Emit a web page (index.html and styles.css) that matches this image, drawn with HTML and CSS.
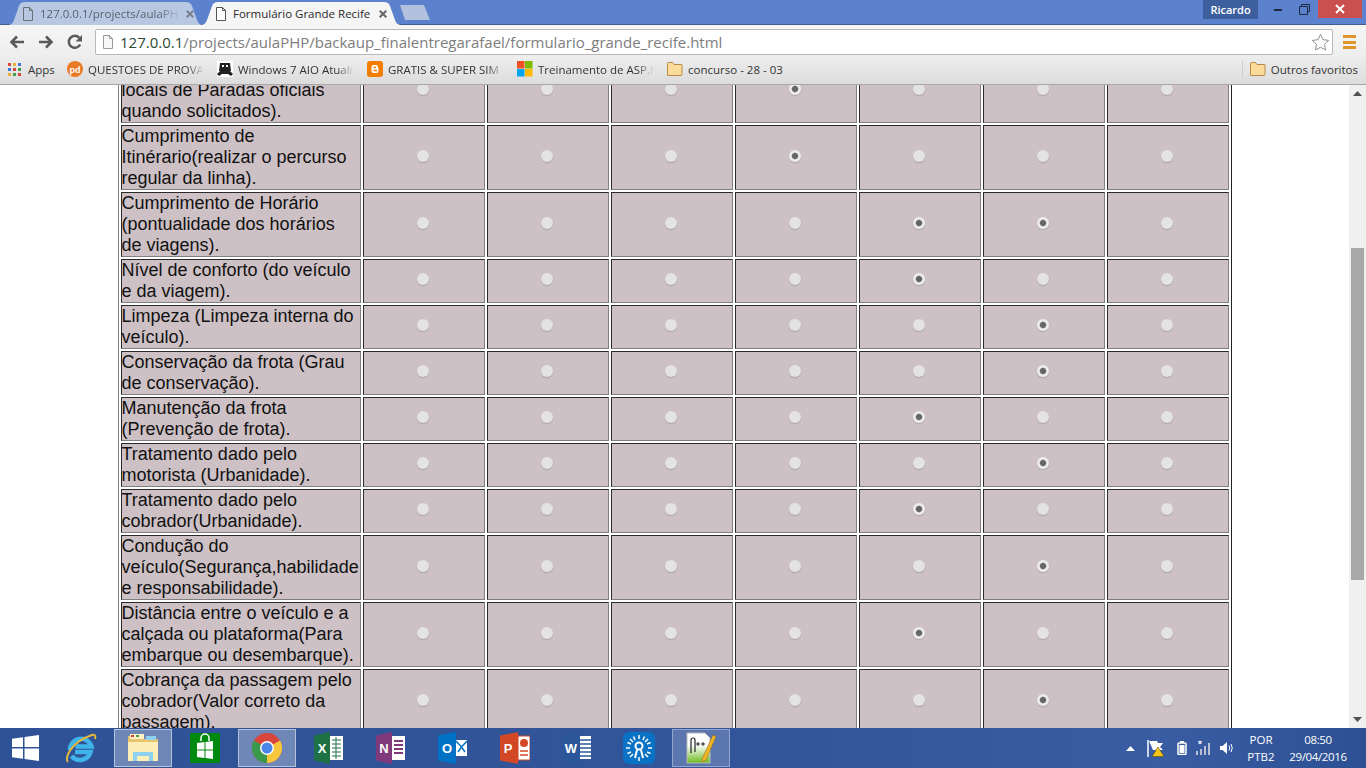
FILE: index.html
```html
<!DOCTYPE html>
<html lang="pt-BR">
<head>
<meta charset="utf-8">
<title>Formulário Grande Recife</title>
<link rel="stylesheet" href="styles.css">
</head>
<body>
<div class="screen">
  <header class="tabstrip">
    <div class="tab tab-inactive">
      <svg class="page-icon" viewBox="0 0 12 14" width="12" height="14"><path d="M1.5.5h6l3 3v10h-9z M7.5.5v3h3" fill="none" stroke="#6b6f78"/></svg>
      <span class="tab-title tab-title-fade">127.0.0.1/projects/aulaPH</span>
      <svg class="tab-x" viewBox="0 0 8 8" width="8" height="8"><path d="M.7.7l6.600 6.600M7.300.7L.7 7.300" stroke="#7a8290" stroke-width="2"/></svg>
    </div>
    <div class="tab tab-active">
      <svg class="page-icon" viewBox="0 0 12 14" width="12" height="14"><path d="M1.5.5h6l3 3v10h-9z M7.5.5v3h3" fill="#fff" stroke="#555"/></svg>
      <span class="tab-title">Formulário Grande Recife</span>
      <svg class="tab-x" viewBox="0 0 8 8" width="8" height="8"><path d="M.7.7l6.600 6.600M7.300.7L.7 7.300" stroke="#666" stroke-width="2"/></svg>
    </div>
    <div class="tab-new"></div>
    <div class="spacer"></div>
    <div class="user">Ricardo</div>
    <div class="winbtn">
      <svg width="8" height="3" viewBox="0 0 8 3"><rect width="8" height="2" y="1" fill="#1d2a44"/></svg>
    </div>
    <div class="winbtn">
      <svg width="11" height="11" viewBox="0 0 11 11"><path d="M2.5 2.500v-2h8v7h-2M.5 2.500h8v8h-8z" fill="none" stroke="#1d2a44"/></svg>
    </div>
    <div class="winclose">
      <svg width="10" height="10" viewBox="0 0 10 10"><path d="M1 1l8 8M9 1l-8 8" stroke="#fff" stroke-width="2"/></svg>
    </div>
  </header>

  <div class="toolbar">
    <svg class="nav-icon" viewBox="0 0 18 18" width="18" height="18"><path d="M16 9H4M9 3.500L3.500 9 9 14.500" fill="none" stroke="#5a5a5a" stroke-width="2.600"/></svg>
    <svg class="nav-icon" viewBox="0 0 18 18" width="18" height="18"><path d="M2 9h12M9 3.500L14.500 9 9 14.500" fill="none" stroke="#5a5a5a" stroke-width="2.600"/></svg>
    <svg class="nav-icon" viewBox="0 0 18 18" width="18" height="18"><path d="M14.200 11.500A6 6 0 1 1 13.300 4.800" fill="none" stroke="#5a5a5a" stroke-width="2.500"/><path d="M16 2v6.500H9.500z" fill="#5a5a5a"/></svg>
    <div class="omnibox">
      <svg class="omni-page" viewBox="0 0 12 14" width="12" height="14"><path d="M1.500.5h6l3 3v10h-9z M7.500.5v3h3" fill="#f6f6f6" stroke="#9a9a9a"/></svg>
      <span class="url"><span class="url-host">127.0.0.1</span>/projects/aulaPHP/backaup_finalentregarafael/formulario_grande_recife.html</span>
      <svg class="star" viewBox="0 0 20 20" width="19" height="19"><path d="M10 1.500l2.600 5.500 6 .8-4.400 4.100 1.100 6L10 15l-5.300 2.900 1.100-6L1.400 7.800l6-.8z" fill="#fff" stroke="#8a8a8a"/></svg>
    </div>
    <div class="menu"><i></i><i></i><i></i></div>
  </div>

  <nav class="bookmarks">
    <a class="bm bm-apps">
      <svg viewBox="0 0 13 13" width="13" height="13" class="bm-icon">
        <rect width="3" height="3" fill="#d8453a"/><rect x="5" width="3" height="3" fill="#e8b030"/><rect x="10" width="3" height="3" fill="#3b78d8"/>
        <rect y="5" width="3" height="3" fill="#3b78d8"/><rect x="5" y="5" width="3" height="3" fill="#d8453a"/><rect x="10" y="5" width="3" height="3" fill="#3fa24a"/>
        <rect y="10" width="3" height="3" fill="#e8b030"/><rect x="5" y="10" width="3" height="3" fill="#3fa24a"/><rect x="10" y="10" width="3" height="3" fill="#d8453a"/>
      </svg>
      <span>Apps</span>
    </a>
    <a class="bm bm-q">
      <svg viewBox="0 0 16 16" width="16" height="16" class="bm-icon"><circle cx="8" cy="8" r="8" fill="#ea7a26"/><text x="8" y="11.500" class="pd-text">pd</text></svg>
      <span class="bm-fade">QUESTOES DE PROVA</span>
    </a>
    <a class="bm bm-w">
      <svg viewBox="0 0 16 16" width="16" height="16" class="bm-icon"><rect width="16" height="16" fill="#fff"/><path d="M3 2h10l1 8H2z" fill="#222"/><rect x="5" y="4" width="2" height="2" fill="#fff"/><rect x="9" y="4" width="2" height="2" fill="#fff"/><path d="M0 13l3-3h10l3 3-2 2-3-2H5l-3 2z" fill="#222"/></svg>
      <span class="bm-fade">Windows 7 AIO Atuali</span>
    </a>
    <a class="bm bm-b">
      <svg viewBox="0 0 16 16" width="16" height="16" class="bm-icon"><rect width="16" height="16" rx="3" fill="#f57d00"/><path d="M6.500 4h2.500a2 2 0 0 1 2 2v1h.5v3a2 2 0 0 1-2 2H6.500a2 2 0 0 1-2-2V6a2 2 0 0 1 2-2z" fill="#fff"/><path d="M6.500 6.500h2.500M6.500 9.500h3.500" stroke="#f57d00" stroke-width="1.300"/></svg>
      <span class="bm-fade">GRATIS &amp; SUPER SIM</span>
    </a>
    <a class="bm bm-m">
      <svg viewBox="0 0 16 16" width="16" height="16" class="bm-icon"><rect width="7.500" height="7.500" fill="#f25022"/><rect x="8" width="7.500" height="7.500" fill="#7fba00"/><rect y="8" width="7.500" height="7.500" fill="#00a4ef"/><rect x="8" y="8" width="7.500" height="7.500" fill="#ffb900"/></svg>
      <span class="bm-fade">Treinamento de ASP.N</span>
    </a>
    <a class="bm bm-c">
      <svg viewBox="0 0 16 14" width="16" height="14" class="bm-icon"><path d="M.5 3V1.500a1 1 0 0 1 1-1h4l1.500 2h7.500a.5.500 0 0 1 .5.500v9.500a1 1 0 0 1-1 1h-13a.5.500 0 0 1-.5-.5z" fill="#fbdc9a" stroke="#b98a42"/></svg>
      <span>concurso - 28 - 03</span>
    </a>
    <div class="spacer"></div>
    <div class="bm-sep"></div>
    <a class="bm bm-o">
      <svg viewBox="0 0 16 14" width="16" height="14" class="bm-icon"><path d="M.5 3V1.500a1 1 0 0 1 1-1h4l1.500 2h7.500a.5.500 0 0 1 .5.500v9.500a1 1 0 0 1-1 1h-13a.5.500 0 0 1-.5-.5z" fill="#fbdc9a" stroke="#b98a42"/></svg>
      <span>Outros favoritos</span>
    </a>
  </nav>

  <div class="viewport">
    <main class="content">
      <table class="survey">
        <tr><td class="q">Cumprimento de paradas nos locais de Paradas oficiais quando solicitados).</td>
          <td><input type="radio"></td><td><input type="radio"></td><td><input type="radio"></td><td><input type="radio" checked></td><td><input type="radio"></td><td><input type="radio"></td><td><input type="radio"></td></tr>
        <tr><td class="q">Cumprimento de Itinérario(realizar o percurso regular da linha).</td>
          <td><input type="radio"></td><td><input type="radio"></td><td><input type="radio"></td><td><input type="radio" checked></td><td><input type="radio"></td><td><input type="radio"></td><td><input type="radio"></td></tr>
        <tr><td class="q">Cumprimento de Horário (pontualidade dos horários de viagens).</td>
          <td><input type="radio"></td><td><input type="radio"></td><td><input type="radio"></td><td><input type="radio"></td><td><input type="radio" checked></td><td><input type="radio" checked></td><td><input type="radio"></td></tr>
        <tr><td class="q">Nível de conforto (do veículo e da viagem).</td>
          <td><input type="radio"></td><td><input type="radio"></td><td><input type="radio"></td><td><input type="radio"></td><td><input type="radio" checked></td><td><input type="radio"></td><td><input type="radio"></td></tr>
        <tr><td class="q">Limpeza (Limpeza interna do veículo).</td>
          <td><input type="radio"></td><td><input type="radio"></td><td><input type="radio"></td><td><input type="radio"></td><td><input type="radio"></td><td><input type="radio" checked></td><td><input type="radio"></td></tr>
        <tr><td class="q">Conservação da frota (Grau de conservação).</td>
          <td><input type="radio"></td><td><input type="radio"></td><td><input type="radio"></td><td><input type="radio"></td><td><input type="radio"></td><td><input type="radio" checked></td><td><input type="radio"></td></tr>
        <tr><td class="q">Manutenção da frota (Prevenção de frota).</td>
          <td><input type="radio"></td><td><input type="radio"></td><td><input type="radio"></td><td><input type="radio"></td><td><input type="radio" checked></td><td><input type="radio"></td><td><input type="radio"></td></tr>
        <tr><td class="q">Tratamento dado pelo motorista (Urbanidade).</td>
          <td><input type="radio"></td><td><input type="radio"></td><td><input type="radio"></td><td><input type="radio"></td><td><input type="radio"></td><td><input type="radio" checked></td><td><input type="radio"></td></tr>
        <tr><td class="q">Tratamento dado pelo cobrador(Urbanidade).</td>
          <td><input type="radio"></td><td><input type="radio"></td><td><input type="radio"></td><td><input type="radio"></td><td><input type="radio" checked></td><td><input type="radio"></td><td><input type="radio"></td></tr>
        <tr><td class="q">Condução do veículo(Segurança,habilidade e responsabilidade).</td>
          <td><input type="radio"></td><td><input type="radio"></td><td><input type="radio"></td><td><input type="radio"></td><td><input type="radio"></td><td><input type="radio" checked></td><td><input type="radio"></td></tr>
        <tr><td class="q">Distância entre o veículo e a calçada ou plataforma(Para embarque ou desembarque).</td>
          <td><input type="radio"></td><td><input type="radio"></td><td><input type="radio"></td><td><input type="radio"></td><td><input type="radio" checked></td><td><input type="radio"></td><td><input type="radio"></td></tr>
        <tr><td class="q">Cobrança da passagem pelo cobrador(Valor correto da passagem).</td>
          <td><input type="radio"></td><td><input type="radio"></td><td><input type="radio"></td><td><input type="radio"></td><td><input type="radio"></td><td><input type="radio" checked></td><td><input type="radio"></td></tr>
      </table>
    </main>
    <aside class="scrollbar">
      <div class="sb-arrow"><svg width="9" height="5" viewBox="0 0 9 5"><path d="M4.500 0L9 5H0z" fill="#505050"/></svg></div>
      <div class="sb-track"><div class="sb-thumb"></div></div>
      <div class="sb-arrow"><svg width="9" height="5" viewBox="0 0 9 5"><path d="M4.500 5L0 0h9z" fill="#505050"/></svg></div>
    </aside>
  </div>

  <footer class="taskbar">
    <div class="start">
      <svg width="27" height="26" viewBox="0 0 27 26"><path d="M0 3.800L11 2.200V12H0zM12.500 2L27 0v12H12.500zM0 13.500h11v10.300L0 22.200zM12.500 13.500H27V26l-14.500-2z" fill="#fff"/></svg>
    </div>
    <div class="task">
      <svg width="32" height="32" viewBox="0 0 32 32"><path d="M5 18a11 11 0 0 1 21.500-3.500H10.500M10 20h15.500a11 11 0 0 1-19 4" fill="none" stroke="#3fb4ea" stroke-width="4.500"/><path d="M3 30C-1 26 6 10 27 3c3-1 4 1 3 4" fill="none" stroke="#e5b73b" stroke-width="2"/></svg>
    </div>
    <div class="task task-on">
      <svg width="32" height="30" viewBox="0 0 32 30"><path d="M1 3h11l2 3h17v22H1z" fill="#e9c46f"/><rect x="3" y="1" width="14" height="5" fill="#fdf1c6"/><rect x="4" y="2" width="3" height="2" fill="#d8453a"/><rect x="9" y="2" width="3" height="2" fill="#3fa24a"/><rect x="19" y="3" width="10" height="4" fill="#8fd2f0"/><path d="M1 9h30v19H1z" fill="#fdeeb8"/><path d="M6 28v-9h20v9h-4v-5H10v5z" fill="#8fd2f0"/></svg>
    </div>
    <div class="task">
      <svg width="30" height="30" viewBox="0 0 30 30"><rect width="30" height="30" fill="#00890f"/><path d="M11 8V5a4 4 0 0 1 8 0v3" fill="none" stroke="#fff" stroke-width="1.500"/><path d="M7 10l7.500-1v7.500H7zM15.500 9L23 8v8.500h-7.500zM7 17.500h7.500V25L7 24zM15.500 17.500H23V26l-7.500-1z" fill="#fff"/></svg>
    </div>
    <div class="task task-on">
      <svg width="30" height="30" viewBox="0 0 30 30"><circle cx="15" cy="15" r="15" fill="#d8453a"/><path d="M15 15L28 7.500A15 15 0 0 1 15 30z" fill="#f7c63a"/><path d="M15 15L15 30A15 15 0 0 1 2 7.500z" fill="#3a9a4c"/><circle cx="15" cy="15" r="7" fill="#fff"/><circle cx="15" cy="15" r="5.500" fill="#4a86e8"/></svg>
    </div>
    <div class="task">
      <svg width="30" height="32" viewBox="0 0 30 32"><path d="M0 3.500L16 0v32L0 28.500z" fill="#1e7145"/><rect x="16" y="4" width="13" height="24" fill="#fff"/><path d="M18 8h9M18 12h9M18 16h9M18 20h9M18 24h9M22 5v22" stroke="#1e7145"/><text x="8" y="21" class="app-letter">X</text></svg>
    </div>
    <div class="task">
      <svg width="30" height="32" viewBox="0 0 30 32"><path d="M0 3.500L16 0v32L0 28.500z" fill="#80397b"/><rect x="16" y="4" width="13" height="24" fill="#fff"/><path d="M18 9h9M18 13h9M18 17h9M18 21h9" stroke="#80397b" stroke-width="2"/><text x="8" y="21" class="app-letter">N</text></svg>
    </div>
    <div class="task">
      <svg width="30" height="32" viewBox="0 0 30 32"><path d="M0 3.500L18 0v32L0 28.500z" fill="#0072c6"/><rect x="18" y="8" width="11" height="16" fill="#fff"/><path d="M18 9l5.500 6L29 9M20 20l3.500-5 3.500 5" fill="none" stroke="#0072c6" stroke-width="1.500"/><text x="9" y="21" class="app-letter">O</text></svg>
    </div>
    <div class="task">
      <svg width="30" height="32" viewBox="0 0 30 32"><path d="M0 3.500L18 0v32L0 28.500z" fill="#d24726"/><path d="M18 4h12v24H18z" fill="#fff" stroke="#d24726"/><circle cx="24" cy="11" r="4" fill="#d24726"/><path d="M20 19h8M20 23h8" stroke="#d24726" stroke-width="1.500"/><text x="8" y="21" class="app-letter">P</text></svg>
    </div>
    <div class="task">
      <svg width="30" height="32" viewBox="0 0 30 32"><path d="M0 3.500L18 0v32L0 28.500z" fill="#2b579a"/><rect x="18" y="4" width="11" height="23" fill="#fff"/><path d="M18 8h11M18 12h11M18 16h11M18 20h11M18 24h11" stroke="#2b579a" stroke-width="1.500"/><text x="9" y="21" class="app-letter">W</text></svg>
    </div>
    <div class="task">
      <svg width="32" height="32" viewBox="0 0 32 32"><rect width="32" height="32" rx="6" fill="#0a72c4"/><g stroke="#fff" stroke-width="1.500"><path d="M16 3v4M16 25v4M3 16h4M25 16h4M7 7l3 3M25 7l-3 3M7 25l3-3M25 25l-3-3M10.500 4.500l1.500 3.500M21.500 4.500L20 8M4.500 10.500L8 12M27.500 10.500L24 12M4.500 21.500L8 20M27.500 21.500L24 20"/></g><circle cx="16" cy="14" r="3.500" fill="none" stroke="#fff" stroke-width="2"/><path d="M14 18l-2 8M18 18l2 8" stroke="#fff" stroke-width="2"/></svg>
    </div>
    <div class="task task-on task-on-dim">
      <svg width="32" height="32" viewBox="0 0 32 32"><defs><linearGradient id="npp-page" x1="0" y1="0" x2="0" y2="1"><stop offset=".4" stop-color="#fff"/><stop offset="1" stop-color="#6dbb1f"/></linearGradient></defs><path d="M2 1h18l5 5v25H2z" fill="url(#npp-page)" stroke="#b9b9b9"/><path d="M6 21V8a2 2 0 0 1 4 0v12" fill="none" stroke="#222" stroke-width="1.200"/><path d="M11 12h4M13 10v4M16 12h4M18 10v4" stroke="#222"/><path d="M17 27L28 3l3 1.500L21 28l-4 2z" fill="#f0b429" stroke="#8a6314" stroke-width=".5"/></svg>
    </div>
    <div class="spacer"></div>
    <div class="tray">
      <svg width="9" height="5" viewBox="0 0 9 5" class="tray-up"><path d="M4.500 0L9 5H0z" fill="#fff"/></svg>
      <svg width="18" height="17" viewBox="0 0 18 17" class="tray-flag"><path d="M1 0v17" stroke="#fff" stroke-width="1.500"/><path d="M2 1h8l1 2h5l-3 4 3 3H6z" fill="#fff"/><path d="M11 7l6 9.500H5z" fill="#f5c518" stroke="#4a3a00" stroke-width=".5"/></svg>
      <svg width="10" height="14" viewBox="0 0 10 14"><rect x="1" y="2" width="8" height="11.500" rx="1" fill="none" stroke="#fff" stroke-width="1.500"/><rect x="3" y="0" width="4" height="2" fill="#fff"/><rect x="2.500" y="4" width="5" height="8" fill="#fff"/></svg>
      <svg width="16" height="14" viewBox="0 0 16 14"><path d="M1 10h2v4H1zM5 8h2v6H5zM9 5h2v9H9zM13 2h2v12h-2z" fill="#b7c0d2"/><text x="3" y="7" class="tray-star">*</text></svg>
      <svg width="16" height="14" viewBox="0 0 16 14"><path d="M1 5h2.500L8 1v12L3.500 9H1z" fill="#fff"/><path d="M10 4.500q1.500 2.500 0 5M12 3q2.500 4 0 8" fill="none" stroke="#fff"/></svg>
    </div>
    <div class="lang"><span>POR</span><span>PTB2</span></div>
    <div class="clock"><span>08:50</span><span>29/04/2016</span></div>
  </footer>
</div>
</body>
</html>
```

FILE: styles.css
```css
* { box-sizing: border-box; }
html, body { margin: 0; height: 100%; overflow: hidden; }
body { font-family: "Liberation Sans", Arial, sans-serif; background: #fff; }
.screen { width: 1366px; height: 768px; display: flex; flex-direction: column; overflow: hidden; }
.spacer { flex: 1; }

/* title bar and tabs */
.tabstrip { height: 25px; flex: none; display: flex; align-items: flex-end; background: #5c82cd; border-bottom: 1px solid #3f5c96; padding-left: 7px; }
.tab { height: 23px; margin-bottom: -1px; display: flex; align-items: center; font: 11.500px "Open Sans", sans-serif; }
.tab-inactive { width: 197px; padding: 0 10px 0 15px; background: #b9c8e2; color: #59616f; clip-path: path("M0 23C4 23 6 21 7 18L12 4C13 1 15 0 18 0H179C182 0 184 1 185 4L190 18C191 21 193 23 197 23Z"); }
.tab-active { width: 202px; margin-left: -4px; padding: 0 15px 0 15px; background: #f5f5f5; color: #2a2a2a; clip-path: path("M0 23C4 23 6 21 7 18L12 4C13 1 15 0 18 0H184C187 0 189 1 190 4L195 18C196 21 198 23 202 23Z"); }
.page-icon { flex: none; margin-right: 6px; }
.tab-title { flex: 1; min-width: 0; white-space: nowrap; overflow: hidden; }
.tab-title-fade { -webkit-mask-image: linear-gradient(90deg, #000 85%, transparent); mask-image: linear-gradient(90deg, #000 85%, transparent); }
.tab-x { flex: none; margin-left: 6px; }
.tab-new { width: 30px; height: 15px; margin: 0 0 4px -2px; background: #b1c1de; clip-path: polygon(0 0, calc(100% - 6px) 0, 100% 100%, 5px 100%); }
.user { width: 55px; height: 19px; margin: 0 7px 5px 0; background: #3d5f9d; color: #fff; font: 600 11px/19px "Open Sans", sans-serif; text-align: center; }
.winbtn { width: 26px; height: 18px; margin-bottom: 6px; display: flex; align-items: center; justify-content: center; }
.winclose { width: 44px; height: 18px; margin: 0 4px 6px 1px; background: #c9504f; display: flex; align-items: center; justify-content: center; }

/* toolbar */
.toolbar { height: 31px; flex: none; display: flex; align-items: center; background: linear-gradient(#f6f6f6, #eeeeee); padding: 3px 0 0 8px; }
.nav-icon { flex: none; margin-right: 11px; }
.omnibox { width: 1238px; height: 26px; flex: none; display: flex; align-items: center; background: #fff; border: 1px solid #b8b8b8; border-radius: 2px; padding: 0 1px 0 6px; }
.omni-page { flex: none; margin-right: 6px; }
.url { flex: 1; font: 15px "Open Sans", sans-serif; color: #7d7d7d; white-space: nowrap; }
.url-host { color: #2d4a34; }
.star { flex: none; margin-right: 1px; }
.menu { margin-left: 10px; width: 13px; display: flex; flex-direction: column; gap: 2.500px; }
.menu i { display: block; height: 3px; background: #e0962a; }

/* bookmarks */
.bookmarks { height: 29px; flex: none; display: flex; align-items: center; background: linear-gradient(#eeeeee, #dcdcdc); border-bottom: 1px solid #a8a8a8; padding: 0 0 2px 8px; font: 11.500px "Open Sans", sans-serif; color: #333; }
.bm { display: flex; align-items: center; flex: none; white-space: nowrap; overflow: hidden; }
.bm-icon { flex: none; margin-right: 5px; }
.bm-apps { width: 59px; } .bm-apps .bm-icon { margin-right: 7px; }
.bm-q { width: 150px; }
.bm-w { width: 150px; }
.bm-b { width: 150px; }
.bm-m { width: 150px; }
.bm-c { width: 130px; }
.bm-fade { width: 116px; overflow: hidden; -webkit-mask-image: linear-gradient(90deg, #000 85%, transparent); mask-image: linear-gradient(90deg, #000 85%, transparent); }
.bm-sep { width: 1px; height: 17px; background: #cfcfcf; margin-right: 7px; }
.bm-o { margin-right: 8px; }
.pd-text { font: 700 9px "Liberation Sans", sans-serif; fill: #fff; text-anchor: middle; }

/* page viewport */
.viewport { flex: 1; min-height: 0; display: flex; }
.content { flex: 1; min-width: 0; overflow: hidden; background: #fff; }
.survey { width: 1114px; margin: -30px auto 0; table-layout: fixed; border-collapse: separate; border-spacing: 2px; border: 1px solid; border-color: #808080 #222 #222 #808080; font-size: 18px; color: #111; }
.survey td { width: 122px; padding: 0; background: #cdc1c5; border: 1px solid; border-color: #2a2a2a #808080 #808080 #2a2a2a; vertical-align: middle; }
.survey td.q { width: 240px; line-height: 21px; }
.survey input { appearance: none; -webkit-appearance: none; display: block; width: 12px; height: 12px; margin: 0 0 4px 53px; border-radius: 50%; border: 0; background: #e3e3e3; box-shadow: 0 1px 1px rgba(90, 90, 90, .3); }
.survey input:checked { background: radial-gradient(circle, #666 0, #666 2.600px, #ececec 3.800px); }

/* scrollbar */
.scrollbar { width: 17px; flex: none; display: flex; flex-direction: column; background: #f0f0f0; }
.sb-arrow { height: 17px; flex: none; display: flex; align-items: center; justify-content: center; }
.sb-track { flex: 1; padding: 146px 2px 0; }
.sb-thumb { height: 332px; background: #a8a8a8; }

/* taskbar */
.taskbar { height: 40px; flex: none; display: flex; align-items: center; background: linear-gradient(90deg, #2f5296, #33559b 60%, #3a5ca3 85%, #2d4f93); color: #fff; }
.start { width: 50px; display: flex; justify-content: center; }
.task { width: 62px; height: 40px; flex: none; display: flex; align-items: center; justify-content: center; }
.task-on { width: 58px; height: 38px; margin: 0 2px; background: rgba(255, 255, 255, .3); border: 1px solid rgba(255, 255, 255, .5); }
.task-on-dim { background: rgba(255, 255, 255, .2); border-color: rgba(255, 255, 255, .35); }
.app-letter { font: 700 13px "Liberation Sans", sans-serif; fill: #fff; text-anchor: middle; }
.tray { display: flex; align-items: center; gap: 8px; margin-right: 6px; }
.tray-up { margin-right: 4px; }
.tray-flag { margin-right: 4px; }
.tray-star { font: 700 10px "Liberation Sans", sans-serif; fill: #fff; }
.lang { width: 40px; display: flex; flex-direction: column; align-items: center; font: 11.500px/17px "Open Sans", sans-serif; }
.clock { width: 74px; display: flex; flex-direction: column; align-items: center; font: 11.500px/17px "Open Sans", sans-serif; letter-spacing: -.35px; margin-right: 11px; }
```
